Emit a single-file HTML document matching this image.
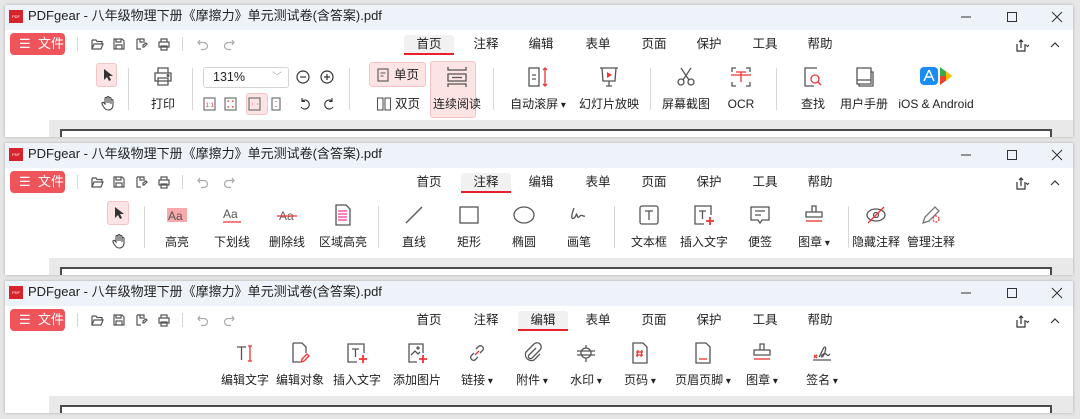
<!DOCTYPE html>
<html><head><meta charset="utf-8">
<style>
*{margin:0;padding:0;box-sizing:border-box}
body{width:1080px;height:419px;background:#e6e6e6;position:relative;overflow:hidden;font-family:"Liberation Sans","Noto Sans CJK SC",sans-serif;color:#222}
.w{position:absolute;left:0;width:1080px;height:138px}
.frame{position:absolute;left:5px;top:5px;width:1068px;height:132px;background:#fff;box-shadow:0 0 3px rgba(0,0,0,.25);overflow:hidden}
.tb{position:absolute;left:5px;top:5px;width:1068px;height:25px;background:#eef2f9}
.gray{position:absolute;left:5px;top:120px;width:1068px;height:17px;background:#e9e9e9}
.side{position:absolute;left:5px;top:120px;width:44px;height:17px;background:#fff}
.doc{position:absolute;left:60px;top:129px;width:992px;height:8px;border:2px solid #4a4a4a;border-bottom:none;background:#fff}
.logo{position:absolute;left:9px;top:10px;width:14px;height:13px;background:#d7232b;color:#fff;font-size:4px;line-height:13px;text-align:center}
.title{position:absolute;left:28px;top:8px;font-size:13px;line-height:16px;color:#222}
.ctl{position:absolute;top:9px}
.file{position:absolute;left:10px;top:33px;width:55px;height:22px;background:#f0545b;border-radius:4px;color:#fff;font-size:13px;line-height:22px;padding-left:9px}
.vs{position:absolute;width:1px;background:#d8d8d8}
.tab{position:absolute;top:35px;width:50px;margin-left:-25px;text-align:center;font-size:12.5px;line-height:18px;color:#222}
.tab.on{background:#f1f1f1;border-bottom:2px solid #e8202a;height:20px;border-radius:3px 3px 0 0}
.it{position:absolute;width:90px;margin-left:-45px;text-align:center;top:64px}
.it svg{display:block;margin:0 auto;width:26px;height:26px}
.it span{display:block;font-size:12px;line-height:16px;margin-top:6px;color:#222;white-space:nowrap}
.pk{position:absolute;background:#fde4e4;border:1px solid #f6c4c4;border-radius:3px}
.ic{position:absolute}
.dd:after{content:" ▾";font-size:10px}
</style></head><body>

<div class="w" style="top:0">
<div class="frame"></div><div class="tb"></div><div class="gray"></div><div class="side"></div><div class="doc"></div>
<div class="logo">PDF</div>
<div class="title">PDFgear - 八年级物理下册《摩擦力》单元测试卷(含答案).pdf</div>
<svg class="ctl" style="left:958px" width="16" height="16"><line x1="3" y1="8" x2="13" y2="8" stroke="#333"/></svg>
<svg class="ctl" style="left:1004px" width="16" height="16"><rect x="3.5" y="3.5" width="9" height="9" fill="none" stroke="#333"/></svg>
<svg class="ctl" style="left:1049px" width="16" height="16"><path d="M3 3L13 13M13 3L3 13" stroke="#333"/></svg>
<div class="file">☰&nbsp;&nbsp;文件</div>
<div class="vs" style="left:77px;top:37px;height:14px"></div><div class="vs" style="left:182px;top:37px;height:14px"></div>
<svg class="ic" style="left:90px;top:37px" width="90" height="14" fill="none" stroke="#555" stroke-width="1.2"><path d="M2 3h4l1 1.5h5v2M2 3v9h9l2-5H4l-2 5"/><path d="M24 2h8l2 2v8H24zM26 2v3h5V2M26 12V8h6v4"/><path d="M47 2h7v4M47 2v10h4M50 2v3h3M53 8l3-2 1 1-3 3h-1z"/><path d="M71 5V2h6v3M69 5h10v5H69zM71 9h6v4h-6z"/></svg>
<svg class="ic" style="left:196px;top:37px" width="40" height="14" fill="none" stroke="#aaa" stroke-width="1.2"><path d="M4 3L2 5.5 4 8M2 5.5h6a3.5 3.5 0 010 7H5"/><path d="M36 3l2 2.5-2 2.5M38 5.5h-6a3.5 3.5 0 000 7h3"/></svg>
<div class="tab on" style="left:429px">首页</div><div class="tab" style="left:486px">注释</div><div class="tab" style="left:541px">编辑</div><div class="tab" style="left:598px">表单</div><div class="tab" style="left:654px">页面</div><div class="tab" style="left:709px">保护</div><div class="tab" style="left:765px">工具</div><div class="tab" style="left:820px">帮助</div>
<svg class="ic" style="left:1014px;top:37px" width="52" height="16" fill="none" stroke="#333" stroke-width="1.2"><path d="M3 7v7h8V7M7 3v8M5 5l2-2 2 2"/><path d="M12 8l1.5 1.5L15 8" stroke-width="1"/><path d="M37 10l4-4 4 4"/></svg>

<div class="pk" style="left:96px;top:63px;width:21px;height:24px"></div>
<svg class="ic" style="left:100px;top:68px" width="14" height="14"><path d="M4 1v11l3-3 2 4 2-1-2-4h4z" fill="#333"/></svg>
<svg class="ic" style="left:100px;top:95px" width="16" height="16" fill="none" stroke="#444" stroke-width="1.1"><path d="M5 9V3.5a1 1 0 012 0V8V2.5a1 1 0 012 0V8V3.5a1 1 0 012 0V9V5.5a1 1 0 012 0V10c0 3-2 5-4.5 5S5 14 3 11L2 9a1 1 0 012-1z"/></svg>
<div class="vs" style="left:128px;top:68px;height:42px"></div>
<div class="it" style="left:163px"><svg viewBox="0 0 26 26" fill="none" stroke="#555" stroke-width="1.3"><path d="M8 9V4h10v5M5 9h16v8H5zM8 14h10v7H8z"/><circle cx="18" cy="11.5" r=".8" fill="#e33"/></svg><span>打印</span></div>
<div class="vs" style="left:192px;top:68px;height:42px"></div>
<div style="position:absolute;left:203px;top:67px;width:86px;height:21px;border:1px solid #d4d4d4;border-radius:3px;font-size:12.5px;line-height:19px;padding-left:9px">131%<span style="position:absolute;right:6px;top:0;color:#aaa;font-size:10px">﹀</span></div>
<svg class="ic" style="left:295px;top:69px" width="42" height="16" fill="none" stroke="#333" stroke-width="1.2"><circle cx="8" cy="8" r="6"/><path d="M5 8h6"/><circle cx="32" cy="8" r="6"/><path d="M29 8h6M32 5v6"/></svg>
<div class="pk" style="left:246px;top:93px;width:22px;height:22px"></div>
<svg class="ic" style="left:202px;top:96px" width="140" height="16" fill="none" stroke="#666" stroke-width="1.1"><rect x="2" y="2" width="11" height="12"/><text x="3.5" y="11" font-size="6" fill="#e33" stroke="none">1:1</text><rect x="23" y="2" width="11" height="12"/><path d="M26 6v-1h1M30 5h1v1M26 10v1h1M31 10v1h-1" stroke="#e33"/><rect x="47" y="2" width="11" height="12"/><path d="M50 8h.5M55 8h.5" stroke="#e33" stroke-width="1.5"/><rect x="70" y="2" width="8" height="12"/><path d="M74 5v1M74 10v1" stroke="#e33"/><path d="M100 5a4.5 4.5 0 11-1 6M100 2v3.5h3" stroke="#333"/><path d="M130 5a4.5 4.5 0 10 1 6M130 2v3.5h-3" stroke="#333"/></svg>
<div class="vs" style="left:349px;top:68px;height:42px"></div>
<div class="pk" style="left:369px;top:62px;width:57px;height:25px"></div>
<svg class="ic" style="left:376px;top:67px" width="14" height="16" fill="none" stroke="#555" stroke-width="1.1"><rect x="2" y="2" width="10" height="12"/><path d="M4.5 6h5M4.5 9h3"/></svg>
<div style="position:absolute;left:394px;top:67px;font-size:12.5px;line-height:16px">单页</div>
<svg class="ic" style="left:376px;top:96px" width="16" height="16" fill="none" stroke="#555" stroke-width="1.1"><rect x="1.5" y="2" width="5.5" height="12"/><rect x="9" y="2" width="5.5" height="12"/></svg>
<div style="position:absolute;left:395px;top:96px;font-size:12.5px;line-height:16px">双页</div>
<div class="pk" style="left:430px;top:61px;width:46px;height:57px"></div>
<div class="it" style="left:457px"><svg viewBox="0 0 26 26" fill="none" stroke="#555" stroke-width="1.3"><path d="M4 3v3h18V3M4 23v-3h18v3M4 10h18v7H4zM8 13.5h10"/></svg><span>连续阅读</span></div>
<div class="vs" style="left:493px;top:68px;height:42px"></div>
<div class="it" style="left:538px"><svg viewBox="0 0 26 26" fill="none" stroke="#555" stroke-width="1.3"><rect x="4" y="4" width="10" height="18"/><path d="M7 11h4M7 15h4"/><path d="M20 4v18M18 6l2-2 2 2M18 20l2 2 2-2" stroke="#e33"/></svg><span class="dd">自动滚屏</span></div>
<div class="it" style="left:609px"><svg viewBox="0 0 26 26" fill="none" stroke="#555" stroke-width="1.3"><path d="M4 4h18M6 4l1 13h12l1-13M13 17v5M10 22h6"/><path d="M11 8v6l5-3z" fill="#e33" stroke="none"/></svg><span>幻灯片放映</span></div>
<div class="vs" style="left:650px;top:68px;height:42px"></div>
<div class="it" style="left:686px"><svg viewBox="0 0 26 26" fill="none" stroke="#555" stroke-width="1.3"><circle cx="8" cy="18" r="3"/><circle cx="18" cy="18" r="3"/><path d="M10 16L18 4M16 16L8 4"/></svg><span>屏幕截图</span></div>
<div class="it" style="left:741px"><svg viewBox="0 0 26 26" fill="none" stroke="#555" stroke-width="1.3"><path d="M4 8V4h4M18 4h4v4M4 18v4h4M22 18v4h-4"/><path d="M3 11h20" stroke="#e33"/><path d="M8 8h10M13 8v10" stroke="#e33"/></svg><span>OCR</span></div>
<div class="vs" style="left:776px;top:68px;height:42px"></div>
<div class="it" style="left:813px"><svg viewBox="0 0 26 26" fill="none" stroke="#555" stroke-width="1.3"><path d="M17 4H5v18h9"/><circle cx="15" cy="15" r="4" stroke="#e33"/><path d="M18 18l3 3" stroke="#e33"/></svg><span>查找</span></div>
<div class="it" style="left:864px"><svg viewBox="0 0 26 26" fill="none" stroke="#555" stroke-width="1.3"><path d="M6 4h14v16H6zM20 8h2v14H8v-2M6 16h14"/></svg><span>用户手册</span></div>
<div class="it" style="left:936px"><svg viewBox="0 0 34 26" style="width:34px"><rect x="1" y="3" width="18" height="18" rx="4" fill="#1a8cf5"/><path d="M10 6l-5 11M10 6l5 11M6 13h8" stroke="#fff" stroke-width="1.5" fill="none"/><path d="M21 3l12 9-12 9z" fill="#34a853"/><path d="M21 12l12 0-12 9z" fill="#ea4335"/><path d="M27 7l6 5-6 5z" fill="#fbbc04"/></svg><span>iOS &amp; Android</span></div>
</div>

<div class="w" style="top:138px">
<div class="frame"></div><div class="tb"></div><div class="gray"></div><div class="side"></div><div class="doc"></div>
<div class="logo">PDF</div>
<div class="title">PDFgear - 八年级物理下册《摩擦力》单元测试卷(含答案).pdf</div>
<svg class="ctl" style="left:958px" width="16" height="16"><line x1="3" y1="8" x2="13" y2="8" stroke="#333"/></svg>
<svg class="ctl" style="left:1004px" width="16" height="16"><rect x="3.5" y="3.5" width="9" height="9" fill="none" stroke="#333"/></svg>
<svg class="ctl" style="left:1049px" width="16" height="16"><path d="M3 3L13 13M13 3L3 13" stroke="#333"/></svg>
<div class="file">☰&nbsp;&nbsp;文件</div>
<div class="vs" style="left:77px;top:37px;height:14px"></div><div class="vs" style="left:182px;top:37px;height:14px"></div>
<svg class="ic" style="left:90px;top:37px" width="90" height="14" fill="none" stroke="#555" stroke-width="1.2"><path d="M2 3h4l1 1.5h5v2M2 3v9h9l2-5H4l-2 5"/><path d="M24 2h8l2 2v8H24zM26 2v3h5V2M26 12V8h6v4"/><path d="M47 2h7v4M47 2v10h4M50 2v3h3M53 8l3-2 1 1-3 3h-1z"/><path d="M71 5V2h6v3M69 5h10v5H69zM71 9h6v4h-6z"/></svg>
<svg class="ic" style="left:196px;top:37px" width="40" height="14" fill="none" stroke="#aaa" stroke-width="1.2"><path d="M4 3L2 5.5 4 8M2 5.5h6a3.5 3.5 0 010 7H5"/><path d="M36 3l2 2.5-2 2.5M38 5.5h-6a3.5 3.5 0 000 7h3"/></svg>
<div class="tab" style="left:429px">首页</div><div class="tab on" style="left:486px">注释</div><div class="tab" style="left:541px">编辑</div><div class="tab" style="left:598px">表单</div><div class="tab" style="left:654px">页面</div><div class="tab" style="left:709px">保护</div><div class="tab" style="left:765px">工具</div><div class="tab" style="left:820px">帮助</div>
<svg class="ic" style="left:1014px;top:37px" width="52" height="16" fill="none" stroke="#333" stroke-width="1.2"><path d="M3 7v7h8V7M7 3v8M5 5l2-2 2 2"/><path d="M12 8l1.5 1.5L15 8" stroke-width="1"/><path d="M37 10l4-4 4 4"/></svg>
<div class="pk" style="left:107px;top:63px;width:22px;height:24px"></div>
<svg class="ic" style="left:111px;top:68px" width="14" height="14"><path d="M4 1v11l3-3 2 4 2-1-2-4h4z" fill="#333"/></svg>
<svg class="ic" style="left:111px;top:95px" width="16" height="16" fill="none" stroke="#444" stroke-width="1.1"><path d="M5 9V3.5a1 1 0 012 0V8V2.5a1 1 0 012 0V8V3.5a1 1 0 012 0V9V5.5a1 1 0 012 0V10c0 3-2 5-4.5 5S5 14 3 11L2 9a1 1 0 012-1z"/></svg>
<div class="vs" style="left:144px;top:68px;height:42px"></div>
<div class="it" style="left:177px"><svg viewBox="0 0 26 26"><rect x="3" y="6" width="20" height="14" fill="#f8a9ab"/><text x="4" y="18" font-size="12" fill="#555" font-family="Liberation Sans">Aa</text></svg><span>高亮</span></div>
<div class="it" style="left:232px"><svg viewBox="0 0 26 26"><text x="4" y="16" font-size="12" fill="#555" font-family="Liberation Sans">Aa</text><path d="M4 20h18" stroke="#e33" stroke-width="1.3"/></svg><span>下划线</span></div>
<div class="it" style="left:287px"><svg viewBox="0 0 26 26"><text x="5" y="18" font-size="12" fill="#666" font-family="Liberation Sans">Aa</text><path d="M3 14h20" stroke="#e33" stroke-width="1.3"/></svg><span>删除线</span></div>
<div class="it" style="left:343px"><svg viewBox="0 0 26 26" fill="none" stroke="#555" stroke-width="1.3"><path d="M6 3h10l4 4v16H6z"/><path d="M8 9h9M8 12h9M8 15h9M8 18h9" stroke="#f07" stroke-opacity=".5" stroke-width="2"/></svg><span>区域高亮</span></div>
<div class="vs" style="left:378px;top:68px;height:42px"></div>
<div class="it" style="left:414px"><svg viewBox="0 0 26 26" fill="none" stroke="#555" stroke-width="1.3"><path d="M5 21L21 5"/></svg><span>直线</span></div>
<div class="it" style="left:469px"><svg viewBox="0 0 26 26" fill="none" stroke="#555" stroke-width="1.3"><rect x="4" y="5" width="18" height="16"/></svg><span>矩形</span></div>
<div class="it" style="left:524px"><svg viewBox="0 0 26 26" fill="none" stroke="#555" stroke-width="1.3"><ellipse cx="13" cy="13" rx="10" ry="8"/></svg><span>椭圆</span></div>
<div class="it" style="left:579px"><svg viewBox="0 0 26 26" fill="none" stroke="#555" stroke-width="1.3"><path d="M8 6c-3 8-3 12 0 10s2-6 3-3 1 3 3 1 3 1 5 0"/></svg><span>画笔</span></div>
<div class="vs" style="left:614px;top:68px;height:42px"></div>
<div class="it" style="left:649px"><svg viewBox="0 0 26 26" fill="none" stroke="#555" stroke-width="1.3"><rect x="4" y="4" width="18" height="18" rx="2"/><path d="M9 9h8M13 9v9"/></svg><span>文本框</span></div>
<div class="it" style="left:704px"><svg viewBox="0 0 26 26" fill="none" stroke="#555" stroke-width="1.3"><path d="M20 13V4H4v18h9"/><path d="M8 9h7M11.5 9v8"/><path d="M19 15v8M15 19h8" stroke="#e33" stroke-width="1.8"/></svg><span>插入文字</span></div>
<div class="it" style="left:760px"><svg viewBox="0 0 26 26" fill="none" stroke="#555" stroke-width="1.3"><path d="M4 5h18v13h-7l-2 3-2-3H4z"/><path d="M8 9h10M8 13h6"/></svg><span>便签</span></div>
<div class="it" style="left:814px"><svg viewBox="0 0 26 26" fill="none" stroke="#555" stroke-width="1.3"><path d="M11 10V4h4v6M5 10h16v5H5z"/><path d="M5 19h16" stroke="#e33"/></svg><span class="dd">图章</span></div>
<div class="vs" style="left:848px;top:68px;height:42px"></div>
<div class="it" style="left:876px"><svg viewBox="0 0 26 26" fill="none" stroke="#555" stroke-width="1.3"><ellipse cx="13" cy="13" rx="9" ry="6"/><circle cx="13" cy="13" r="2.5"/><path d="M5 21L21 5" stroke="#e33"/></svg><span>隐藏注释</span></div>
<div class="it" style="left:931px"><svg viewBox="0 0 26 26" fill="none" stroke="#777" stroke-width="1.3"><path d="M5 21l2-6 10-10 4 4-10 10z"/><circle cx="18" cy="17" r="3" stroke="#e33" stroke-dasharray="2 1.2"/></svg><span>管理注释</span></div>
</div>

<div class="w" style="top:276px">
<div class="frame"></div><div class="tb"></div><div class="gray"></div><div class="side"></div><div class="doc"></div>
<div class="logo">PDF</div>
<div class="title">PDFgear - 八年级物理下册《摩擦力》单元测试卷(含答案).pdf</div>
<svg class="ctl" style="left:958px" width="16" height="16"><line x1="3" y1="8" x2="13" y2="8" stroke="#333"/></svg>
<svg class="ctl" style="left:1004px" width="16" height="16"><rect x="3.5" y="3.5" width="9" height="9" fill="none" stroke="#333"/></svg>
<svg class="ctl" style="left:1049px" width="16" height="16"><path d="M3 3L13 13M13 3L3 13" stroke="#333"/></svg>
<div class="file">☰&nbsp;&nbsp;文件</div>
<div class="vs" style="left:77px;top:37px;height:14px"></div><div class="vs" style="left:182px;top:37px;height:14px"></div>
<svg class="ic" style="left:90px;top:37px" width="90" height="14" fill="none" stroke="#555" stroke-width="1.2"><path d="M2 3h4l1 1.5h5v2M2 3v9h9l2-5H4l-2 5"/><path d="M24 2h8l2 2v8H24zM26 2v3h5V2M26 12V8h6v4"/><path d="M47 2h7v4M47 2v10h4M50 2v3h3M53 8l3-2 1 1-3 3h-1z"/><path d="M71 5V2h6v3M69 5h10v5H69zM71 9h6v4h-6z"/></svg>
<svg class="ic" style="left:196px;top:37px" width="40" height="14" fill="none" stroke="#aaa" stroke-width="1.2"><path d="M4 3L2 5.5 4 8M2 5.5h6a3.5 3.5 0 010 7H5"/><path d="M36 3l2 2.5-2 2.5M38 5.5h-6a3.5 3.5 0 000 7h3"/></svg>
<div class="tab" style="left:429px">首页</div><div class="tab" style="left:486px">注释</div><div class="tab on" style="left:543px">编辑</div><div class="tab" style="left:598px">表单</div><div class="tab" style="left:654px">页面</div><div class="tab" style="left:709px">保护</div><div class="tab" style="left:765px">工具</div><div class="tab" style="left:820px">帮助</div>
<svg class="ic" style="left:1014px;top:37px" width="52" height="16" fill="none" stroke="#333" stroke-width="1.2"><path d="M3 7v7h8V7M7 3v8M5 5l2-2 2 2"/><path d="M12 8l1.5 1.5L15 8" stroke-width="1"/><path d="M37 10l4-4 4 4"/></svg>
<div class="it" style="left:245px"><svg viewBox="0 0 26 26" fill="none" stroke="#555" stroke-width="1.3"><path d="M5 7h9M9.5 7v13"/><path d="M18 6v15M16 6h4M16 21h4" stroke="#e33"/></svg><span>编辑文字</span></div>
<div class="it" style="left:300px"><svg viewBox="0 0 26 26" fill="none" stroke="#555" stroke-width="1.3"><path d="M6 3h9l4 4v6M6 3v19h7"/><path d="M14 22l1-3 5-5 2 2-5 5z" stroke="#e33"/></svg><span>编辑对象</span></div>
<div class="it" style="left:357px"><svg viewBox="0 0 26 26" fill="none" stroke="#555" stroke-width="1.3"><path d="M20 13V4H4v18h9"/><path d="M8 9h7M11.5 9v8"/><path d="M19 15v8M15 19h8" stroke="#e33" stroke-width="1.8"/></svg><span>插入文字</span></div>
<div class="it" style="left:417px"><svg viewBox="0 0 26 26" fill="none" stroke="#555" stroke-width="1.3"><path d="M19 13V4H5v18h8"/><path d="M7 15l4-4 3 3 2-2"/><circle cx="14" cy="8" r="1"/><path d="M19 15v8M15 19h8" stroke="#e33" stroke-width="1.8"/></svg><span>添加图片</span></div>
<div class="it" style="left:477px"><svg viewBox="0 0 26 26" fill="none" stroke="#555" stroke-width="1.3"><path d="M12 9l3-3a3 3 0 014 4l-3 3M14 17l-3 3a3 3 0 01-4-4l3-3"/><path d="M11 15l4-4" stroke="#e33"/></svg><span class="dd">链接</span></div>
<div class="it" style="left:532px"><svg viewBox="0 0 26 26" fill="none" stroke="#555" stroke-width="1.3"><path d="M17 8l-7 7a2 2 0 003 3l8-8a4 4 0 00-6-6l-8 8a6 6 0 008 8l6-6"/></svg><span class="dd">附件</span></div>
<div class="it" style="left:586px"><svg viewBox="0 0 26 26" fill="none" stroke="#555" stroke-width="1.3"><path d="M8 13a5 5 0 0010 0M8 13a5 5 0 0110 0M13 5v3M13 18v4M4 11h18M4 15h18"/></svg><span class="dd">水印</span></div>
<div class="it" style="left:640px"><svg viewBox="0 0 26 26" fill="none" stroke="#555" stroke-width="1.3"><path d="M6 3h10l4 4v16H6z"/><path d="M11 10l-1 7M15 10l-1 7M9 12h7M9 15h7" stroke="#e33"/></svg><span class="dd">页码</span></div>
<div class="it" style="left:703px"><svg viewBox="0 0 26 26" fill="none" stroke="#555" stroke-width="1.3"><path d="M6 3h10l4 4v16H6z"/><path d="M9 19h8" stroke="#e33"/></svg><span class="dd">页眉页脚</span></div>
<div class="it" style="left:762px"><svg viewBox="0 0 26 26" fill="none" stroke="#555" stroke-width="1.3"><path d="M11 10V4h4v6M5 10h16v5H5z"/><path d="M5 19h16" stroke="#e33"/></svg><span class="dd">图章</span></div>
<div class="it" style="left:822px"><svg viewBox="0 0 26 26" fill="none" stroke="#555" stroke-width="1.3"><path d="M4 20h18"/><path d="M5 15l3 3M8 15l-3 3" stroke="#e33"/><path d="M10 17c3-4 4-10 6-10s-1 10-3 10 2-5 4-3 2 2 4 0"/></svg><span class="dd">签名</span></div>
</div>
</body></html>
